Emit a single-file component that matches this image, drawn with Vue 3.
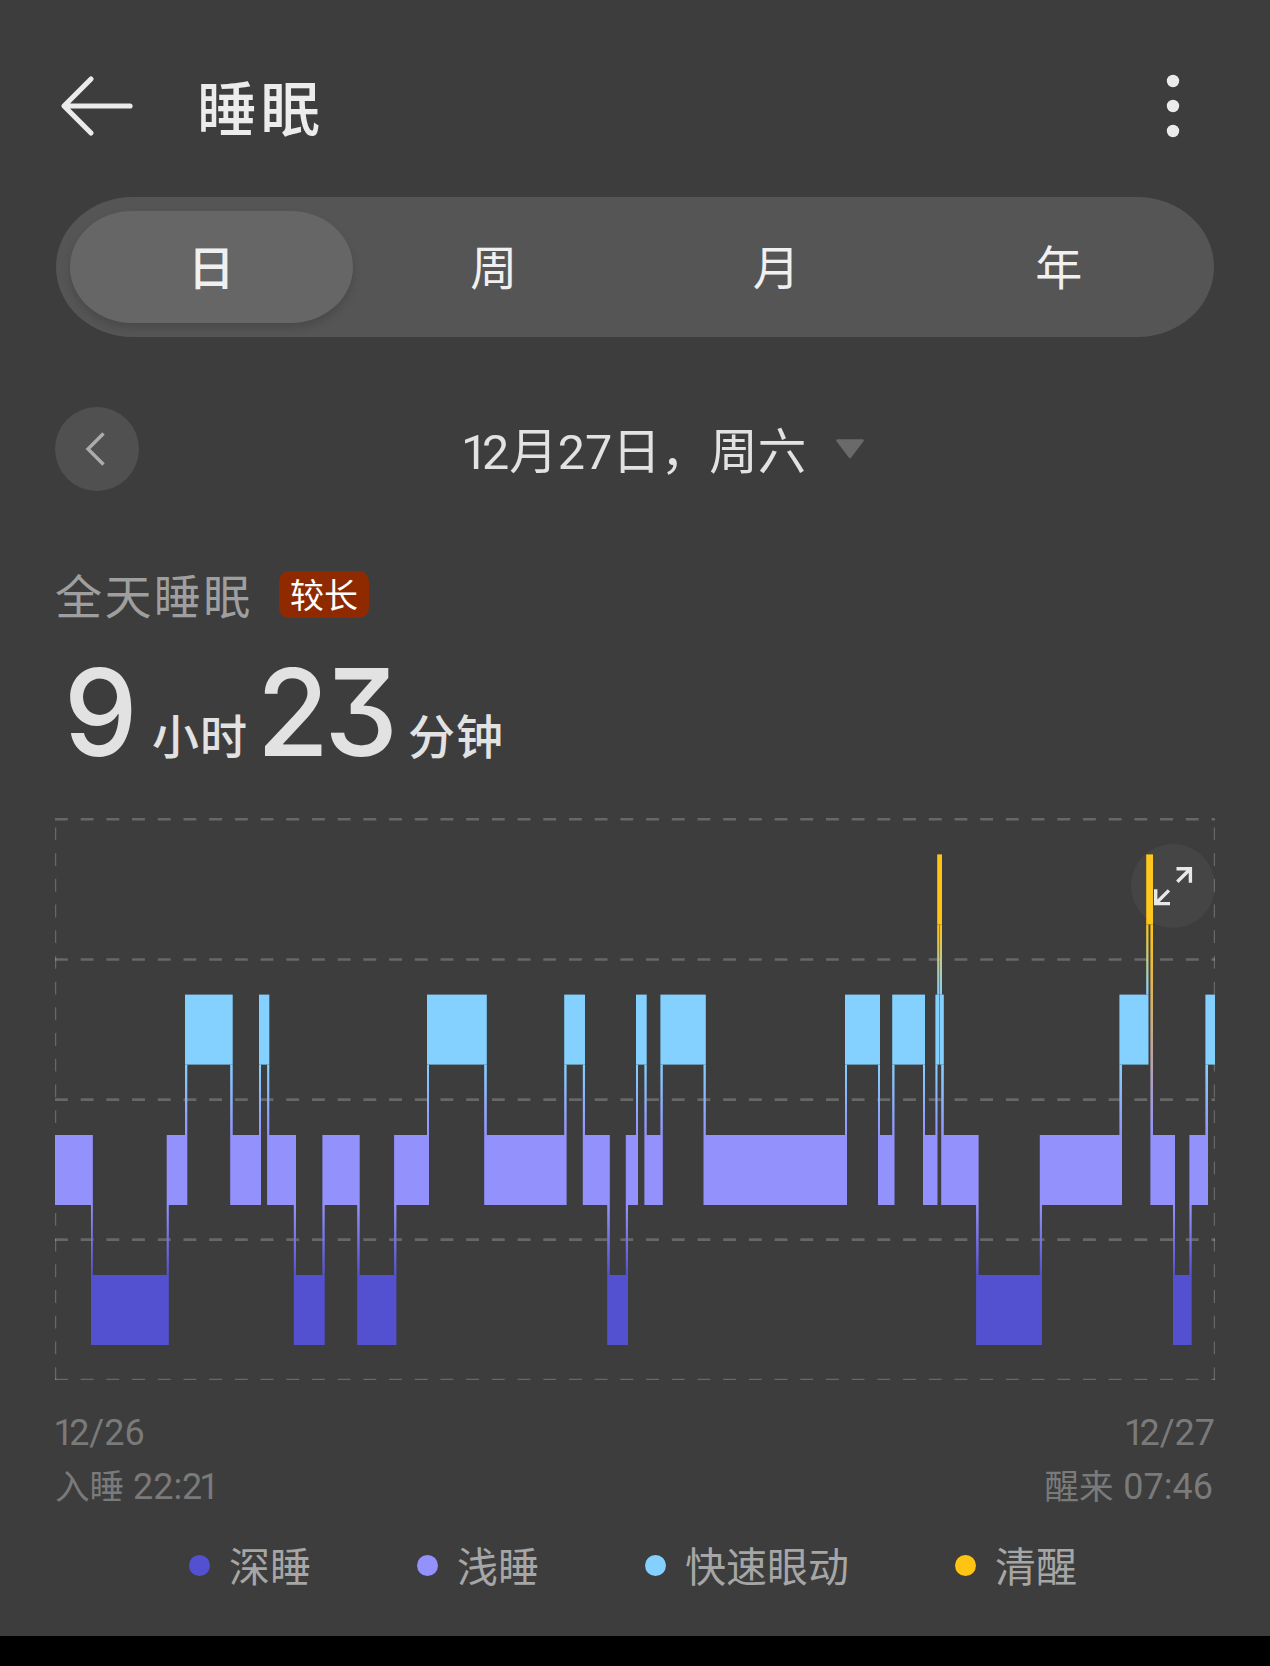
<script setup>
const tabs = ['日', '周', '月', '年']

const stages = {
  deep: { label: '深睡', color: '#5451d1', y: 1275 },
  light: { label: '浅睡', color: '#9392fd', y: 1135 },
  rem: { label: '快速眼动', color: '#84d0ff', y: 994.6 },
  awake: { label: '清醒', color: '#ffc413', y: 854.4 },
}
const BAR = 70

// [stage, start x, end x]; neighbours overlap by the width of their connector
const segments = [
  ['light', 55, 92.8], ['deep', 91, 168.8], ['light', 166.7, 187.3], ['rem', 185, 232.7],
  ['light', 230.2, 261], ['rem', 259, 269.3], ['light', 267.1, 296], ['deep', 293.8, 324.7],
  ['light', 322.4, 359.7], ['deep', 357.2, 396.4], ['light', 394.1, 429], ['rem', 427, 486.8],
  ['light', 484.2, 566.6], ['rem', 564.2, 585], ['light', 582.8, 609.8], ['deep', 607.2, 628],
  ['light', 625.8, 638], ['rem', 636, 646.7], ['light', 644.4, 662.8], ['rem', 660.4, 705.8],
  ['light', 703.5, 847], ['rem', 845, 880], ['light', 878, 894.5], ['rem', 892.2, 925],
  ['light', 923, 937.5], ['rem', 935.4, 939.3], ['awake', 937.2, 942], ['rem', 939.7, 943.8],
  ['light', 941.2, 978.6], ['deep', 976.1, 1042], ['light', 1039.8, 1122], ['rem', 1119.4, 1148.5],
  ['awake', 1146.2, 1153], ['light', 1150.4, 1175], ['deep', 1173, 1191.7],
  ['light', 1189.4, 1208], ['rem', 1205.4, 1215],
].map(([stage, x1, x2]) => ({ stage, x1, x2, ...stages[stage] }))

const connectors = segments.slice(1).map((b, i) => {
  const a = segments[i]
  const [top, bottom] = a.y < b.y ? [a, b] : [b, a]
  return {
    x: b.x1,
    w: a.x2 - b.x1,
    y: top.y + BAR,
    h: bottom.y - top.y - BAR,
    fill: `url(#${top.stage}-${bottom.stage})`,
  }
})

const gradients = [['awake', 'rem'], ['awake', 'light'], ['rem', 'light'], ['light', 'deep']]
const gridLines = [819.2, 959.5, 1099.6, 1239.6]
</script>

<template>
  <main class="screen">
    <header class="bar">
      <svg class="back" width="76" height="64" viewBox="0 0 76 64">
        <path d="M33 5 6 32 33 59M7 32H72" fill="none" stroke="#ebebeb" stroke-width="5.200" stroke-linecap="round" stroke-linejoin="round" />
      </svg>
      <h1>睡眠</h1>
      <svg class="more" width="14" height="64" viewBox="0 0 14 64">
        <circle v-for="y in [7, 32, 57]" :key="y" cx="7" :cy="y" r="6.200" fill="#ebebeb" />
      </svg>
    </header>

    <nav class="tabs">
      <button v-for="(t, i) in tabs" :key="t" class="tab" :class="{ active: i === 0 }">{{ t }}</button>
    </nav>

    <section class="date-row">
      <button class="prev">
        <svg width="84" height="84" viewBox="0 0 84 84">
          <path d="M48.500 26.500 33 42l15.500 15.500" fill="none" stroke="#acacac" stroke-width="3.400" />
        </svg>
      </button>
      <div class="date"><b class="one">1</b>2月27日，周六</div>
      <svg class="caret" width="28" height="20" viewBox="0 0 28 20">
        <path d="M1.500 1.500h25L14 18Z" fill="#6a6a6a" stroke="#6a6a6a" stroke-width="2.500" stroke-linejoin="round" />
      </svg>
    </section>

    <section class="summary">
      <span class="caption">全天睡眠</span>
      <span class="badge">较长</span>
    </section>
    <section class="duration">
      <span class="num nine">9</span><span class="unit">小时</span>
      <span class="num pair">23</span><span class="unit">分钟</span>
    </section>

    <svg class="chart" width="1160" height="563" viewBox="55 817 1160 563">
      <defs>
        <linearGradient v-for="[a, b] in gradients" :id="`${a}-${b}`" :key="a + b" x1="0" y1="0" x2="0" y2="1">
          <stop offset="0" :stop-color="stages[a].color" />
          <stop offset="1" :stop-color="stages[b].color" />
        </linearGradient>
      </defs>
      <g class="grid">
        <line v-for="y in gridLines" :key="y" x1="55" :y1="y" x2="1215" :y2="y" stroke-width="2.600" />
        <line x1="55" y1="1379.400" x2="1215" y2="1379.400" stroke-width="1.300" />
        <line x1="55.600" y1="1380" x2="55.600" y2="826" stroke-width="1.300" />
        <line x1="1214.400" y1="1380" x2="1214.400" y2="826" stroke-width="1.300" />
      </g>
      <rect v-for="(c, i) in connectors" :key="'c' + i" :x="c.x" :y="c.y" :width="c.w" :height="c.h" :fill="c.fill" />
      <rect v-for="(s, i) in segments" :key="'s' + i" :x="s.x1" :y="s.y" :width="s.x2 - s.x1" :height="BAR" :fill="s.color" />
      <g class="expand">
        <circle cx="1173" cy="886" r="42" fill="#fff" fill-opacity=".045" />
        <path d="M1176.500 868.700h13.900v14M1190 869.200l-12.700 12.600M1155.700 889.300v14.300h14.300M1156 903.200l12.900-12.800" fill="none" stroke="#e8e8e8" stroke-width="3.400" />
      </g>
    </svg>

    <section class="axis">
      <div><b class="one">1</b>2/26<br /><span class="cjk">入睡</span> 22:2<b class="one last">1</b></div>
      <div class="end"><b class="one">1</b>2/27<br /><span class="wake"><span class="cjk">醒来</span> 07:46</span></div>
    </section>

    <ul class="legend">
      <li v-for="(s, k) in stages" :key="k">
        <i class="dot" :style="{ background: s.color }"></i><span>{{ s.label }}</span>
      </li>
    </ul>
    <footer class="navbar"></footer>
  </main>
</template>

<style>
body {
  margin: 0;
  background: #3d3d3d;
}
</style>

<style scoped>
.screen {
  display: flex;
  flex-direction: column;
  box-sizing: border-box;
  width: 1270px;
  height: 1666px;
  overflow: hidden;
  background: #3d3d3d;
  color: #e2e2e2;
  font-family: Roboto, 'Noto Sans CJK SC', sans-serif;
}
button {
  padding: 0;
  border: 0;
  background: none;
  color: inherit;
  font: inherit;
}
svg {
  display: block;
  flex: none;
}
/* narrow figure one */
.one {
  margin-left: -0.04em;
  font-weight: inherit;
  letter-spacing: -0.13em;
}
.one.last {
  margin-left: -0.09em;
}
.bar {
  display: flex;
  align-items: center;
  height: 64px;
  padding: 74px 90px 0 58px;
}
h1 {
  margin: 9px 0 0 63px;
  color: #ececec;
  font-size: 59.500px;
  font-weight: 500;
  line-height: 64px;
  letter-spacing: 4px;
}
.more {
  margin-left: auto;
}
.tabs {
  display: flex;
  box-sizing: border-box;
  height: 140px;
  margin: 59px 56px 0;
  padding: 14px;
  border-radius: 77px / 70px;
  background: #555;
}
.tab {
  flex: 1;
  box-sizing: border-box;
  padding-top: 3px;
  border-radius: 62px / 56px;
  color: #f0f0f0;
  font-size: 47px;
  line-height: 108px;
}
.tab.active {
  background: #666;
  box-shadow: 0 5px 8px rgba(0, 0, 0, 0.14);
  font-weight: 500;
}
.date-row {
  display: flex;
  align-items: center;
  height: 84px;
  margin: 70px 55px 0;
}
.prev {
  width: 84px;
  height: 84px;
  border-radius: 50%;
  background: #505050;
}
.date {
  width: 345px;
  margin: 7px 0 0 324px;
  font-size: 48.500px;
  line-height: 84px;
  white-space: nowrap;
}
.caret {
  margin-left: 28px;
}
.summary {
  display: flex;
  align-items: center;
  height: 48px;
  margin: 79px 55px 0;
}
.caption {
  width: 224px;
  padding-top: 7px;
  color: #9f9f9f;
  font-size: 47px;
  line-height: 48px;
  letter-spacing: 2.400px;
}
.badge {
  width: 90px;
  height: 47px;
  border-radius: 10px;
  background: #8f2a00;
  color: #fff;
  font-size: 34px;
  line-height: 51px;
  text-align: center;
}
.duration {
  display: flex;
  align-items: baseline;
  height: 120px;
  margin: 34px 0 0 55px;
}
.num {
  box-sizing: border-box;
  font-family: Inter, sans-serif;
  font-size: 121px;
  font-weight: 500;
  line-height: 120px;
  letter-spacing: -5px;
  font-feature-settings: 'cv09';
  transform: scaleX(0.97);
  transform-origin: 0 0;
}
.nine {
  width: 97px;
  padding-left: 9px;
}
.pair {
  width: 160px;
  padding-left: 9px;
}
.unit {
  font-size: 47px;
  font-weight: 500;
  letter-spacing: 1px;
  transform: translateY(-2.500px);
}
.chart {
  margin: 45px 0 0 55px;
}
.grid line {
  stroke: #fff;
  stroke-opacity: 0.22;
  stroke-dasharray: 12.850 12.850;
}
.axis {
  display: flex;
  justify-content: space-between;
  margin: 26px 55px 0;
  color: #7a7a7a;
  font-size: 36px;
  line-height: 54px;
}
.cjk {
  font-size: 34.500px;
}
.end {
  text-align: right;
}
.wake {
  padding-right: 2px;
  word-spacing: 1px;
}
.legend {
  display: flex;
  gap: 106px;
  margin: 21px 0 0 189px;
  padding: 0;
  color: #a6a6a6;
  font-size: 41px;
  line-height: 60px;
  list-style: none;
}
.legend li {
  display: flex;
  align-items: center;
  height: 60px;
}
.legend span {
  padding-top: 6px;
}
.dot {
  width: 21px;
  height: 21px;
  margin-right: 19px;
  border-radius: 50%;
}
.navbar {
  height: 30px;
  margin-top: auto;
  background: #000;
}
</style>
